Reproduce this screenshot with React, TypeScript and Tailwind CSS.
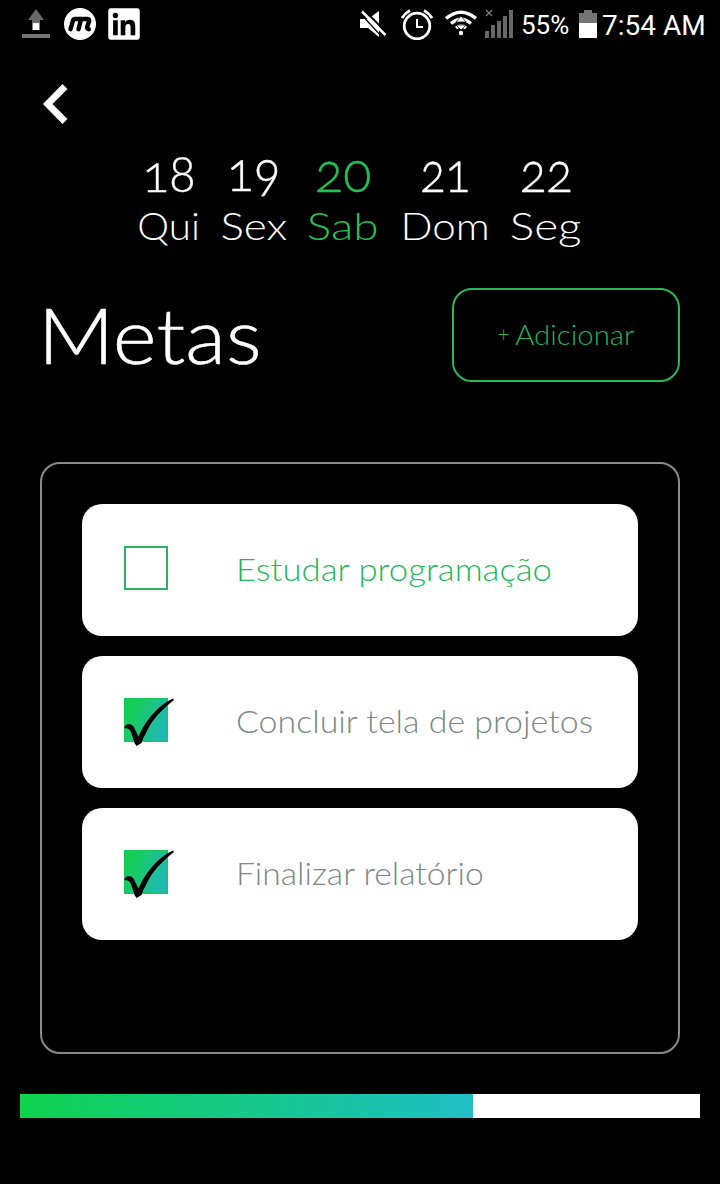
import React from 'react';
import { FaLinkedin } from 'react-icons/fa';

type Day = { number: string; numberStyle: string; name: string; width: string; nameStyle: string; active?: boolean };

const days: Day[] = [
  { number: '18', numberStyle: 'text-[52px] leading-[49px] scale-x-[0.95]', name: 'Qui', width: 'w-[86px]', nameStyle: 'scale-x-[1.06]' },
  { number: '19', numberStyle: 'text-[55px] leading-[45px] scale-x-[0.9]', name: 'Sex', width: 'w-[84px]', nameStyle: 'scale-x-[1.16]' },
  { number: '20', numberStyle: 'text-[56px] leading-[45px] scale-x-[0.93]', name: 'Sab', width: 'w-[94px]', nameStyle: 'scale-x-[1.21]', active: true },
  { number: '21', numberStyle: 'text-[56px] leading-[45px] scale-x-[0.83]', name: 'Dom', width: 'w-[110px]', nameStyle: 'scale-x-[1.11]' },
  { number: '22', numberStyle: 'text-[56px] leading-[45px] scale-x-[0.87]', name: 'Seg', width: 'w-[92px]', nameStyle: 'scale-x-[1.21]' },
];

const goals = [
  { label: 'Estudar programação', stretch: 'scale-x-[1.085]', done: false },
  { label: 'Concluir tela de projetos', stretch: 'scale-x-[1.06]', done: true },
  { label: 'Finalizar relatório', stretch: 'scale-x-[1.05]', done: true },
];

function StatusBar() {
  return (
    <div className="flex h-12 items-start justify-between pl-[22px] pr-[14px] pt-2 font-[Roboto,sans-serif] font-normal">
      <div className="flex">
        <svg className="h-8 w-7" viewBox="0 0 28 32">
          <path d="M14 1L22 12H18V15H10V12H6Z" fill="#686868" />
          <path d="M10.500 15H17.500V22H10.500Z" fill="#fff" />
          <path d="M0 26H28V30H0Z" fill="#747474" />
        </svg>
        <div className="ml-[14px] flex h-8 w-8 items-center justify-center rounded-full bg-white">
          <svg className="h-8 w-8" viewBox="0 0 32 32" fill="none" stroke="#000" strokeLinecap="round" strokeLinejoin="round" strokeWidth="4.400">
            <path d="M6.500 21.200L9 12.500Q9.500 11 11 11H23.500Q25.800 11 25 13.500L23.300 18.500Q22.700 21.200 24.800 21.200M17 11.500L14.500 21.200" />
          </svg>
        </div>
        <FaLinkedin className="-mt-[2px] ml-3 h-9 w-8" />
      </div>
      <div className="flex">
        <svg className="h-8 w-[26px]" viewBox="0 0 26 32">
          <path d="M0 11H8L19 3V29L8 20H0Z" fill="#fff" />
          <path d="M4.500 2.500L28 26" stroke="#000" strokeWidth="2.200" />
          <path d="M2 3.500L25.500 27" stroke="#fff" strokeWidth="2.600" />
          <path d="M0 5L22 29" stroke="#000" strokeWidth="1.200" />
        </svg>
        <svg className="ml-[15px] h-8 w-8" viewBox="0 0 32 32" fill="none" stroke="#fff" strokeWidth="2.800">
          <circle cx="16" cy="18" r="12.800" />
          <path d="M16 11V19H22" strokeWidth="2" />
          <path d="M1 10Q4 5 9 2.500M31 10Q28 5 23 2.500" />
        </svg>
        <svg className="ml-3 h-8 w-8" viewBox="0 0 32 32" fill="none" stroke="#fff" strokeWidth="3.400">
          <path d="M1 10.500Q16 -2 31 10.500" />
          <path d="M6 15.500Q16 7 26 15.500" />
          <path d="M11 20Q16 16 21 20" />
          <circle cx="16" cy="25" r="2.200" fill="#fff" stroke="none" />
          <path d="M16 8L21 14H11ZM11 17H21L16 22Z" fill="#fff" stroke="#000" strokeWidth="0.700" />
        </svg>
        <svg className="ml-2 h-8 w-7" viewBox="0 0 28 32" fill="#686868">
          <path d="M0 23h4v7h-4zM6 17h4v13h-4zM12 13h4v17h-4zM18 8h4v22h-4zM24 2h4v28h-4z" />
          <path d="M1 2L7 8M7 2L1 8" stroke="#808080" strokeWidth="1.200" />
        </svg>
        <span className="ml-[8px] w-[58px] whitespace-nowrap text-[26px] leading-[35px]">55%</span>
        <svg className="h-8 w-[18px]" viewBox="0 0 18 32">
          <path d="M5 2H13V5H18V15H0V5H5Z" fill="#747474" />
          <path d="M0 15H18V30H0Z" fill="#fff" />
        </svg>
        <span className="ml-[5px] w-[104px] whitespace-nowrap text-[28px] leading-[35px]">7:54 AM</span>
      </div>
    </div>
  );
}

function DayColumn({ day }: { day: Day }) {
  return (
    <div className={`flex flex-col items-center ${day.width} ${day.active ? 'text-[#23c055]' : 'text-white'}`}>
      <div className="h-[54px] [font-feature-settings:'onum'] [-webkit-text-stroke:0.4px_currentColor]">
        <div className={day.numberStyle}>{day.number}</div>
      </div>
      <div className={`h-[46px] text-[38px] leading-[46px] ${day.nameStyle}`}>{day.name}</div>
    </div>
  );
}

function Checkbox({ done, id }: { done: boolean; id: string }) {
  if (!done) return <div className="size-11 border-2 border-[#2bb463]" />;
  return (
    <svg className="size-11 overflow-visible" viewBox="0 0 44 44">
      <defs>
        <linearGradient id={id} x1="0" y1="0.1" x2="1" y2="0.5">
          <stop offset="0" stopColor="#10d04c" />
          <stop offset="0.35" stopColor="#18ca68" />
          <stop offset="1" stopColor="#20b8b4" />
        </linearGradient>
      </defs>
      <rect width="44" height="44" fill="#18c85a" />
      <rect x="1.500" y="1.500" width="41" height="41" fill={`url(#${id})`} />
      <path
        d="M0.500 28.500Q2 26 5 26Q8 26 9.500 28.500L14.500 38.500Q20 26 27 18Q38 5 49 0.500L50 2Q42 8 35 15.500Q27 24 23 33Q19 40 17.500 45L12.500 48L10.500 45Q8 36 6 32Q4 30 0.500 30Z"
        fill="#000"
      />
    </svg>
  );
}

export default function App() {
  return (
    <div className="flex h-[1184px] w-[720px] flex-col overflow-hidden bg-black font-[Lato,sans-serif] font-light text-white">
      <StatusBar />
      <div className="h-[100px] pl-[43px] pt-9">
        <svg className="h-10 w-[25px]" viewBox="0 0 25 40">
          <path d="M0 20L19.500 0L24.500 5L9.500 20L24.500 35L19.500 40Z" fill="#fff" />
        </svg>
      </div>
      <div className="flex h-[140px] pl-[126px]">
        {days.map((day) => (
          <DayColumn key={day.name} day={day} />
        ))}
      </div>
      <div className="flex h-[94px] items-center justify-between pl-[38px] pr-10">
        <h1 className="origin-left scale-x-[1.09] pb-[3px] text-[77px] leading-[90px] [-webkit-text-stroke:0.6px_white]">Metas</h1>
        <button className="flex h-[94px] w-[228px] items-center justify-center gap-2 rounded-[20px] border-2 border-[#25b95a] pb-[2px] text-[28px] text-[#23b455]">
          <span className="text-[21px]">+</span>
          <span className="mr-[3px] scale-x-[1.05]">Adicionar</span>
        </button>
      </div>
      <div className="mx-10 mt-20 flex h-[592px] flex-col gap-5 rounded-[20px] border-2 border-[#838d89] p-10">
        {goals.map((goal, i) => (
          <div key={goal.label} className="flex h-[132px] shrink-0 items-center rounded-[20px] bg-white pl-[42px]">
            <div className="-mt-1"><Checkbox done={goal.done} id={`check-fill-${i}`} /></div>
            <span className={`ml-[67.5px] origin-left whitespace-nowrap pb-[2px] text-[32px] ${goal.stretch} ${goal.done ? 'text-[#7b8986]' : 'text-[#20b858]'}`}>{goal.label}</span>
          </div>
        ))}
      </div>
      <div className="mx-5 mt-10 h-6 bg-white">
        <div className="h-6 w-[453px] bg-linear-to-r from-[#0fd24c] via-[#17c98a] to-[#21bdc4]" />
      </div>
    </div>
  );
}
